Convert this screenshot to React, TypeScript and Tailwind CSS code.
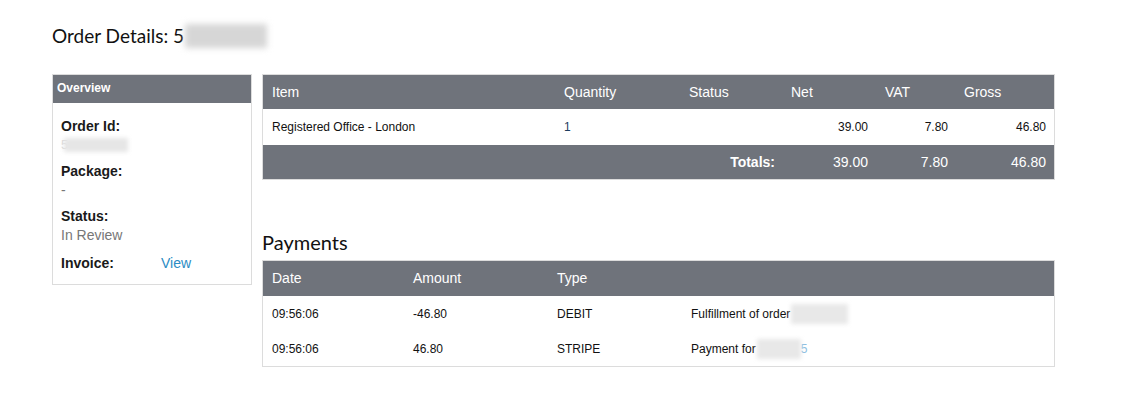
import React from 'react';

export default function App() {
    const items = [
        { name: "Registered Office - London", qty: "1", status: "", net: "39.00", vat: "7.80", gross: "46.80" }
    ];

    const payments = [
        { date: "09:56:06", amount: "-46.80", type: "DEBIT", label: "Fulfillment of order", blur: "w-[57px]", tail: "" },
        { date: "09:56:06", amount: "46.80", type: "STRIPE", label: "Payment for", blur: "w-[44px]", tail: "5" }
    ];

    return (
        <div className="min-h-[402px] bg-white px-[52px] pt-[20px] font-['Liberation_Sans',Arial,sans-serif] text-[#1a1a1a]">
            {/* Title */}
            <div className="flex items-center h-[32px]">
                <h1 className="font-['Lato','Open_Sans',sans-serif] text-[19px] leading-[32px] text-[#111]">
                    Order Details: 5
                </h1>
                <div className="ml-[1px] h-[24px] w-[82px] bg-[#d6d6d6] blur-[3px]"></div>
            </div>

            <div className="mt-[22px] flex gap-[10px]">
                {/* Overview */}
                <div className="w-[200px] h-[211px] border border-[#dcdcdc] self-start">
                    <div className="h-[28px] bg-[#6f737b] px-[4px] text-[12px] font-bold leading-[26px] text-white">
                        Overview
                    </div>
                    <div className="pl-[8px] pt-[13px] text-[14px]">
                        <div className="mb-[7px]">
                            <p className="font-bold leading-[20px]">Order Id:</p>
                            <div className="flex items-center h-[18px]">
                                <span className="text-[#d8d8d8] text-[13px]">5</span>
                                <div className="-ml-[4px] h-[14px] w-[64px] bg-[#e6e6e6] blur-[2px]"></div>
                            </div>
                        </div>
                        <div className="mb-[7px]">
                            <p className="font-bold leading-[20px]">Package:</p>
                            <p className="leading-[18px] text-[#777]">-</p>
                        </div>
                        <div className="mb-[8px]">
                            <p className="font-bold leading-[20px]">Status:</p>
                            <p className="leading-[19px] text-[#777]">In Review</p>
                        </div>
                        <div className="flex leading-[20px]">
                            <span className="w-[100px] font-bold">Invoice:</span>
                            <span className="text-[#2b8cc4]">View</span>
                        </div>
                    </div>
                </div>

                <div className="w-[793px]">
                    {/* Items table */}
                    <div className="border border-[#dcdcdc]">
                        <div className="grid grid-cols-[291px_125px_102px_94px_79px_1fr] h-[34px] items-center bg-[#6f737b] text-[14px] text-white">
                            <span className="pl-[9px]">Item</span>
                            <span className="pl-[10px]">Quantity</span>
                            <span className="pl-[10px]">Status</span>
                            <span className="pl-[10px]">Net</span>
                            <span className="pl-[10px]">VAT</span>
                            <span className="pl-[10px]">Gross</span>
                        </div>
                        {items.map((item, idx) => (
                            <div key={idx} className="grid grid-cols-[291px_125px_102px_94px_79px_1fr] h-[36px] items-center text-[12px] text-[#111]">
                                <span className="pl-[9px]">{item.name}</span>
                                <span className="pl-[10px] text-[#1d3c5e]">{item.qty}</span>
                                <span className="pl-[10px]">{item.status}</span>
                                <span className="pr-[7px] text-right">{item.net}</span>
                                <span className="pr-[6px] text-right">{item.vat}</span>
                                <span className="pr-[8px] text-right">{item.gross}</span>
                            </div>
                        ))}
                        <div className="grid grid-cols-[518px_94px_79px_1fr] h-[34px] items-center bg-[#6f737b] text-[14px] text-white">
                            <span className="pr-[6px] text-right font-bold">Totals:</span>
                            <span className="pr-[7px] text-right">39.00</span>
                            <span className="pr-[6px] text-right">7.80</span>
                            <span className="pr-[8px] text-right">46.80</span>
                        </div>
                    </div>

                    {/* Payments */}
                    <h2 className="mt-[48px] mb-[4px] font-['Lato','Open_Sans',sans-serif] text-[20px] leading-[28px] text-[#111]">
                        Payments
                    </h2>
                    <div className="border border-[#dcdcdc]">
                        <div className="grid grid-cols-[140px_144px_134px_1fr] h-[35px] items-center bg-[#6f737b] text-[14px] text-white">
                            <span className="pl-[9px]">Date</span>
                            <span className="pl-[10px]">Amount</span>
                            <span className="pl-[10px]">Type</span>
                            <span></span>
                        </div>
                        {payments.map((p, idx) => (
                            <div key={idx} className="grid grid-cols-[140px_144px_134px_1fr] h-[35px] items-center text-[12px] text-[#111]">
                                <span className="pl-[9px]">{p.date}</span>
                                <span className="pl-[10px]">{p.amount}</span>
                                <span className="pl-[10px]">{p.type}</span>
                                <div className="pl-[10px] flex items-center">
                                    <span>{p.label}</span>
                                    <div className={`ml-[1px] h-[20px] ${p.blur} bg-[#e8e8e8] blur-[2px]`}></div>
                                    {p.tail && <span className="text-[#8cbde0]">{p.tail}</span>}
                                </div>
                            </div>
                        ))}
                    </div>
                </div>
            </div>
        </div>
    );
}
